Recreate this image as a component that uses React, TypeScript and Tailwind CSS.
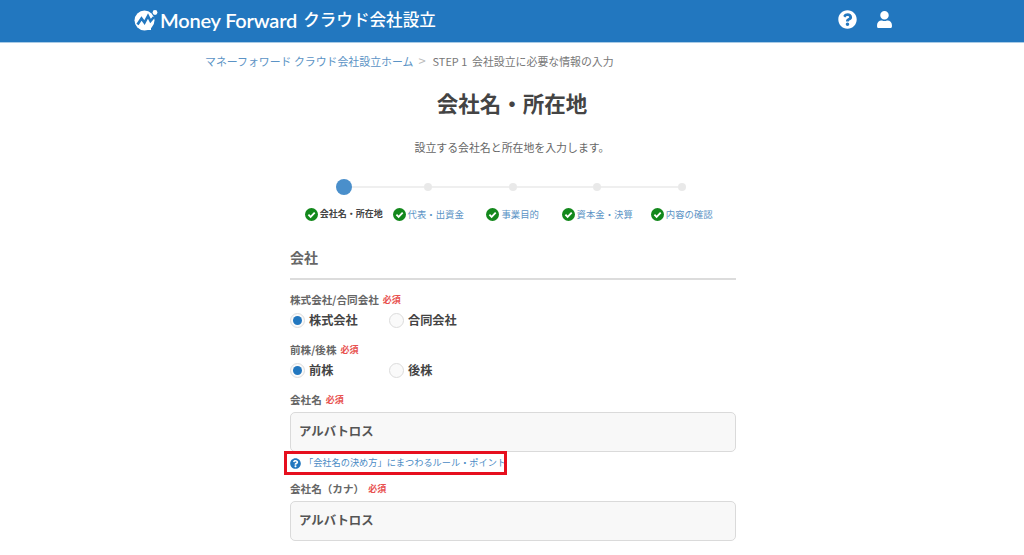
import { FaQuestionCircle, FaUser } from "react-icons/fa";

const jp = "font-['Noto_Sans_CJK_JP','Noto_Sans',sans-serif]";

function Logo() {
  return (
    <svg width="24" height="22" viewBox="0 0 24 22" className="shrink-0">
      <circle cx="10.5" cy="11.5" r="10" fill="#fff" />
      <path d="M3.5 15.5 L7.5 9.5 L10.5 13.5 L14 7 L16.5 12 L20 8" fill="none" stroke="#2277bf" strokeWidth="2.6" />
      <path d="M7 21 L7 15 L10.5 18 L14 13 L17 17 L17 21 Z" fill="#fff" />
      <circle cx="21" cy="3.5" r="2.4" fill="#fff" />
    </svg>
  );
}

function Check() {
  return (
    <svg width="13" height="13" viewBox="0 0 13 13" className="shrink-0">
      <circle cx="6.5" cy="6.5" r="6.5" fill="#13881c" />
      <path d="M3.4 6.7 L5.6 8.9 L9.7 4.6" fill="none" stroke="#fff" strokeWidth="1.8" />
    </svg>
  );
}

function Req() {
  return <span className="text-[9px] font-bold text-[#e8514f] ml-[4px]">必須</span>;
}

function Label({ text, extra = "" }: { text: string; extra?: string }) {
  return (
    <div className={`flex items-center h-[14px] text-[10.6px] font-bold text-[#666] ${extra}`}>
      {text}
      <Req />
    </div>
  );
}

function Radio({ label, on, className = "" }: { label: string; on?: boolean; className?: string }) {
  return (
    <div className={`flex items-center ${className}`}>
      <span className="flex items-center justify-center w-[15px] h-[15px] rounded-full bg-[#fafafa] border border-[#dcdcdc]">
        {on && <span className="block w-[9px] h-[9px] rounded-full bg-[#2277bf]" />}
      </span>
      <span className="ml-[4px] text-[12.2px] font-bold text-[#444] leading-none">{label}</span>
    </div>
  );
}

function Field({ value }: { value: string }) {
  return (
    <div className="h-[40px] w-full flex items-center pl-[8px] pb-[2px] bg-[#f8f8f8] border border-[#dadada] rounded-[5px] text-[12.4px] font-bold text-[#555]">
      {value}
    </div>
  );
}

const steps = [
  { t: "会社名・所在地", cur: true },
  { t: "代表・出資金" },
  { t: "事業目的" },
  { t: "資本金・決算" },
  { t: "内容の確認" },
];

export default function App() {
  return (
    <div className={`w-[1024px] h-[555px] overflow-hidden bg-white ${jp}`}>
      <header className="h-[43px] bg-[#2277bf] border-b border-[#a9cbe6] flex items-center pl-[134px] pr-[131px] pb-[3px] justify-between">
        <div className="flex items-center text-white">
          <Logo />
          <span className="ml-[2px] text-[20px] font-semibold font-['Lato',sans-serif] tracking-[-0.2px]">Money Forward</span>
          <span className="ml-[6px] text-[16.6px] font-medium">クラウド会社設立</span>
        </div>
        <div className="flex items-center gap-[19px] text-white">
          <FaQuestionCircle size={19} />
          <FaUser size={17} />
        </div>
      </header>

      <nav className="mt-[10px] pl-[205px] flex items-center h-[16px] text-[10.9px]">
        <span className="text-[#5b93c5]">マネーフォワード クラウド会社設立ホーム</span>
        <span className="ml-[5px] mr-[7px] text-[13px] text-[#bbb]">&gt;</span>
        <span className="text-[#777]">STEP 1&nbsp; 会社設立に必要な情報の入力</span>
      </nav>

      <h1 className="mt-[18px] text-center text-[21.5px] leading-[32px] font-bold text-[#444]">会社名・所在地</h1>
      <p className="mt-[20px] text-center text-[10.9px] leading-[16px] text-[#666]">設立する会社名と所在地を入力します。</p>

      <div className="mt-[24px] ml-[336px] w-[350px] flex items-center h-[16px]">
        <span className="w-[16px] h-[16px] rounded-full bg-[#4a8fcb] shrink-0" />
        {steps.slice(1).map((s, i) => (
          <div key={s.t} className={`flex items-center shrink-0 ${i === 0 ? "w-[80px]" : "w-[84.5px]"}`}>
            <span className="flex-1 h-[2px] bg-[#efefef]" />
            <span className="w-[8px] h-[8px] rounded-full bg-[#e9e9e9] shrink-0" />
          </div>
        ))}
      </div>

      <div className="mt-[12px] ml-[301.5px] w-[422.5px] grid grid-cols-5">
        {steps.map((s) => (
          <div key={s.t} className="flex items-center justify-center whitespace-nowrap gap-[2px] h-[14px] -mx-2">
            <Check />
            <span className={s.cur ? "text-[9px] font-bold text-[#444]" : "text-[9.4px] text-[#5b93c5]"}>{s.t}</span>
          </div>
        ))}
      </div>

      <main className="mt-[26px] ml-[290px] w-[446px]">
        <h2 className="h-[31px] text-[14px] leading-[20px] font-bold text-[#666]">会社</h2>
        <div className="h-[2px] bg-[#dcdcdc]" />

        <Label text="株式会社/合同会社" extra="mt-[13px]" />
        <div className="mt-[5px] flex h-[16px]">
          <Radio label="株式会社" on className="w-[99px]" />
          <Radio label="合同会社" />
        </div>

        <Label text="前株/後株" extra="mt-[15px]" />
        <div className="mt-[5px] flex h-[16px]">
          <Radio label="前株" on className="w-[99px]" />
          <Radio label="後株" />
        </div>

        <Label text="会社名" extra="mt-[15px]" />
        <div className="mt-[5px]">
          <Field value="アルバトロス" />
        </div>

        <div className="relative mt-[4px] h-[14px] flex items-center text-[9.2px] text-[#4a8ac4] whitespace-nowrap">
          <FaQuestionCircle size={11} className="text-[#2277bf] shrink-0" />
          <span className="ml-[3px]">「会社名の決め方」にまつわるルール・ポイント</span>
          <div className="absolute left-[-6px] top-[-5px] w-[223px] h-[24px] border-[3px] border-[#e60f1e]" />
        </div>

        <Label text="会社名（カナ）" extra="mt-[12px]" />
        <div className="mt-[5px]">
          <Field value="アルバトロス" />
        </div>
      </main>
    </div>
  );
}
